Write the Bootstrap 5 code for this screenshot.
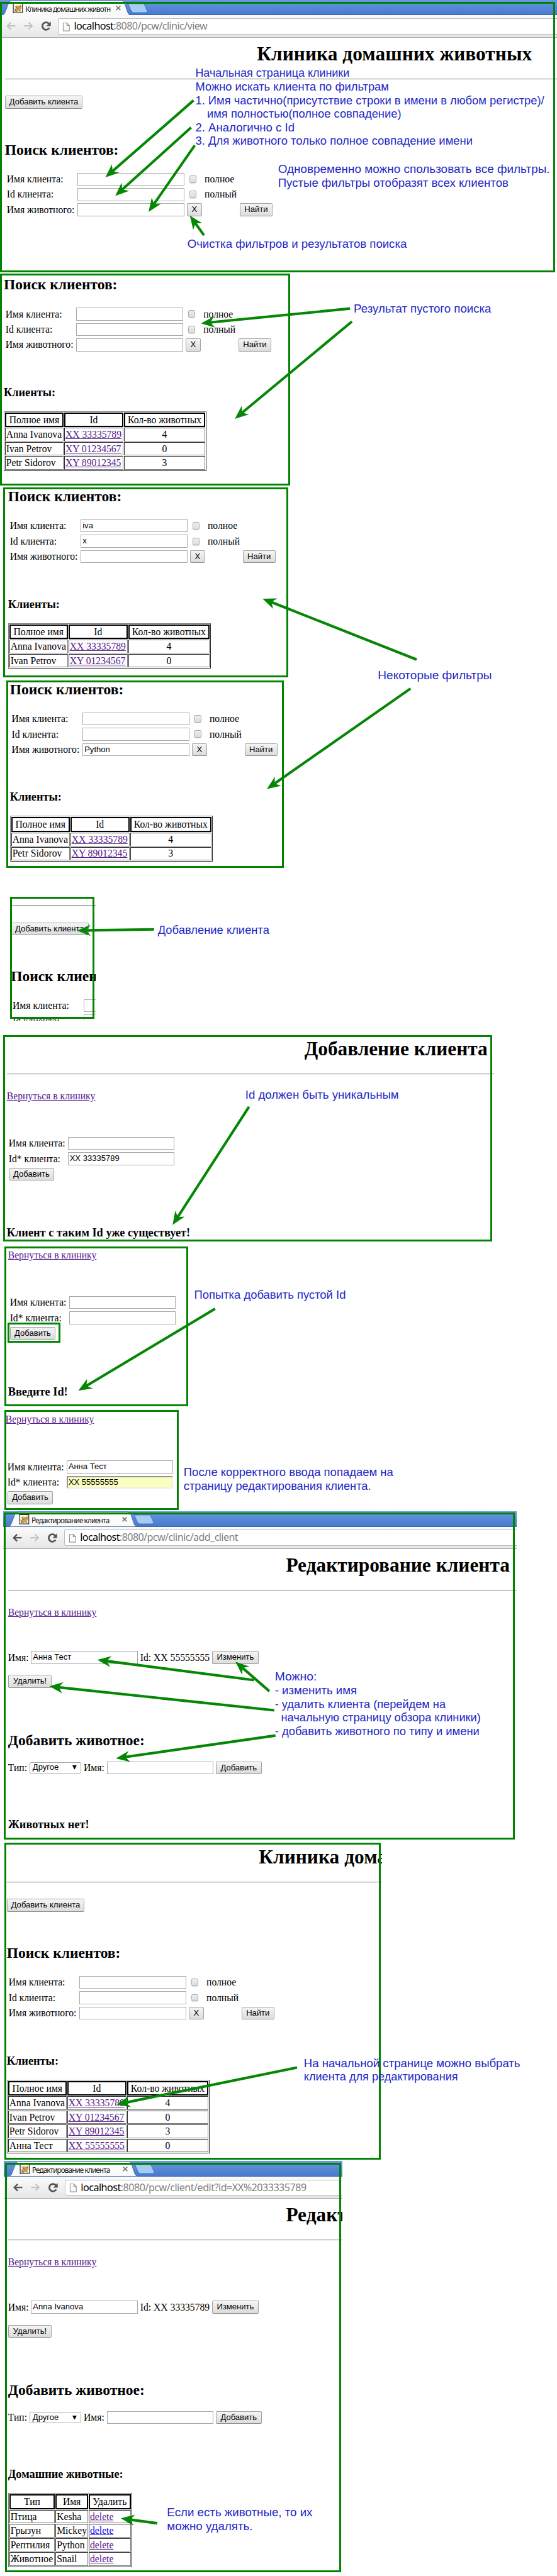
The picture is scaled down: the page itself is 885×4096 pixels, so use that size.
<!DOCTYPE html>
<html lang="ru">
<head>
<meta charset="utf-8">
<title>Клиника домашних животных</title>
<link href="https://cdn.jsdelivr.net/npm/bootstrap@5.3.0/dist/css/bootstrap.min.css" rel="stylesheet">
<style>
html,body{margin:0;overflow:hidden;background:#fff}
body{font:16px/18px "Liberation Serif",serif;color:#000}
.guide{width:904px;height:4182.5px;zoom:.9793;overflow:hidden;position:relative}
/* one captured page fragment, with its green frame drawn over it */
.shot{position:relative;flex:none}
.clip{overflow:hidden;width:100%;height:100%;white-space:nowrap}
.shot::after{content:"";position:absolute;inset:var(--in,0);border:3.1px solid #028402;pointer-events:none}
#s1{width:904px;height:442px;--in:3px 3px 0 0}
#s2{width:471px;height:344px;margin-top:2px}
#s3{width:463px;height:309px;margin:3px 0 0 5px}
#s4{width:451px;height:304px;margin:5px 0 0 10px}
#s5{width:139px;height:201px;margin:47px 0 0 16px;--in:0 2px 3px 0}
#s6{width:797px;height:335px;margin:24px 0 0 5px;--in:0 3px 0 0}
#s7{width:298px;height:259px;margin:8px 0 0 7px}
#s8{width:283px;height:163px;margin:6px 0 0 7px}
#s9{width:833px;height:533px;margin:2px 0 0 5px;--in:2px 3px 0 1px}
#s10{width:613px;height:515px;margin:5px 0 0 7px;--in:0 2px 0 0}
#s11{width:550px;height:668px;margin:2px 0 0 6px;--in:3px 3px 0 2px}
#s1 .sheet{margin-left:8px}#s2 .sheet{margin-left:6px}#s3 .sheet{margin-left:8px}#s4 .sheet{margin-left:6px}
#s5 .sheet{margin-left:1.5px}#s6 .sheet{margin-left:6px}#s7 .sheet{margin-left:6px}#s8 .sheet{margin-left:2px}
#s9 .sheet{margin-left:8px}#s10 .sheet{margin-left:4px}#s11 .sheet{margin-left:7px}
.sheet h1,.sheet h2,.sheet h3{font-family:"Liberation Serif",serif;font-weight:700;margin:0;color:#000}
.sheet h1{font-size:32px;line-height:36px;height:36px;padding-left:409px;margin-top:8px}
.sheet h2{font-size:24px;line-height:27px;height:27px}
.sheet h3{font-size:18.72px;line-height:21px;height:21px;margin-top:56.4px}
#s6 h1{padding-left:483px;margin-top:4px}#s9 h1,#s11 h1{padding-left:451px}#s10 h1{margin-top:5px}
#s2 h2{margin-top:4.4px}#s3 h2{margin-top:1.4px}#s4 h2{margin-top:.6px}
#s1 h2,#s5 h2,#s10 h2{margin-top:53px}
#s6 h3,#s7 h3{margin-top:74.4px}#s9 h3,#s11 h3{margin-top:71.4px}
#s9 h2,#s11 h2{margin-top:71px}
.rule{height:2px;border-top:1px solid #989898;background:#eee;margin-top:22.4px}
#s5 .rule{margin:13.6px 0 0 1.5px}
.solo{margin-top:26px;height:21px}
.back{display:block;height:18px;margin-top:25.5px}
#s7 .back{margin-top:5px}#s8 .back{margin-top:7px}
.sheet a{color:#551a8b;text-decoration:underline}
.sheet a.fresh{color:#00e}
.fields{display:flex;flex-direction:column;gap:4px;margin-top:24px}
.fields.adding{margin-top:57.3px}
.line{display:flex;height:21px;align-items:center}
.lab{width:118px;padding-left:3px;flex:none}
.adding .lab{width:99px}
.fld{width:173px;height:21px;border:1px solid #a9a9a9;background:#fff;font:13.33px/19px "Liberation Sans",sans-serif;padding-left:2px;flex:none}
.fld.auto{background:#faffbd;border:2.05px solid;border-color:#969696 #eee #eee #969696;line-height:17px;padding-left:1px}
.tick{width:12px;height:12px;border:1px solid #aaa;border-radius:2.5px;background:linear-gradient(#eee,#dcdcdc);box-shadow:0 1px 1px #ddd;margin:0 13px 0 8px;flex:none}
.sheet .btn{font:13.33px/19px "Liberation Sans",sans-serif;color:#000;padding:0;height:21px;border:1px solid #a3a3a3;border-bottom-color:#8f8f8f;border-radius:2px;background:linear-gradient(#f5f5f5,#dcdcdc);flex:none;display:block}
.w-add{width:126px}.w-x{width:25px;margin-left:4px}.w-find{width:53px;margin-left:61px}.w-put{width:74px}.w-ed{width:75px;margin-left:4px}.w-del{width:71px}
.adding .w-put{margin-left:3px}
.grid-b{border:1px solid;border-color:gray #2b2b2b #2b2b2b gray;border-collapse:separate;border-spacing:2px;margin-top:20px;table-layout:fixed}
.grid-b th{border:2.05px solid #000;font-weight:400;text-align:center;height:24px;padding:0 1px;line-height:18px}
.grid-b td{border:1px solid;border-color:#2b2b2b gray gray #2b2b2b;height:22px;padding:0 1px;line-height:18px}
.clients{width:329px}.pets{width:201px}
.clients td:last-child{text-align:center}
.sel{width:84px;height:19px;border:1px solid #a9a9a9;border-radius:2px;font:13.33px/17px "Liberation Sans",sans-serif;padding:0 6px 0 4px;display:flex;justify-content:space-between;align-items:center;margin:0 4px}
/* browser header */
.strip{height:25px;background:linear-gradient(#6698e4,#4a79cd);display:flex;border-bottom:1px solid #3a63a8;position:relative}
.strip svg{position:absolute;left:0;top:0}
.tabtext{position:relative;margin:7px 0 0 41px;width:138px;height:15px;font:12px/15px "Noto Sans",sans-serif;color:#111}
.tools{height:36px;background:linear-gradient(#fbfbfb,#e6e6e6);border-bottom:1px solid #a4a4a4;display:flex}
.tools>svg{flex:none}
.addr{margin:5px 0 0 1px;height:26px;flex:1;border:1px solid #bdbdbd;border-right:0;border-radius:3px 0 0 3px;background:#fff;display:flex;font:16.5px/24px "Noto Sans",sans-serif;color:#808080}
.addr svg{margin:5px 6px 0 6px}
.addr b{font-weight:400;color:#000}
#s9 .strip svg,#s11 .strip svg{left:5px}#s9 .tabtext,#s11 .tabtext{margin-left:46px}#s9 .tools,#s11 .tools{padding-left:5px}
.ring{position:absolute;left:5px;top:124px;width:86px;height:32px;border:3.1px solid #028402}
.over{position:absolute;left:0;top:0;pointer-events:none}
.over text{font:18px "Liberation Sans",sans-serif;fill:#2328c6}
.over polygon{fill:#058705}
</style>
<script src="https://cdn.jsdelivr.net/npm/bootstrap@5.3.0/dist/js/bootstrap.bundle.min.js"></script>
</head>
<body>
<svg width="0" height="0" class="position-absolute">
<defs>
<linearGradient id="tabfill" x2="0" y2="1"><stop stop-color="#fff"/><stop offset="1" stop-color="#fafafa"/></linearGradient>
<symbol id="tabs" viewBox="0 0 245 25"><path d="M0 25C7 25 7 23 9 18L14 5Q15.500 1 19 1H197Q200.500 1 202 5L207 20Q209 25 213 25Z" fill="url(#tabfill)" stroke="#3c63a5" stroke-width=".8"/><path d="M209 6H232Q234 6 235 9L239 18Q240 20.500 237 20.500H217Q214 20.500 213 18L208.500 8Q208 6 209 6Z" fill="#a5cbf7" stroke="#3d66ad" stroke-width=".9"/>
<rect x="21.500" y="5.500" width="15" height="15" fill="#fff" stroke="#000"/><path d="M25 11l1-3 2 2h3l3-3 1 3v4l-2 2 1 3h-3l-2-2-3 2h-3l2-4z" fill="#d2a04c"/><path d="M22.500 14l3 2-2 3M29 18l-3 1M31 11l1 1M34 10l-1 1M26 12l3 2M32 17l2 2" stroke="#5b4a2c" fill="none"/><path d="M23 9l2 2M28 9l2 1" stroke="#777"/>
<path d="M188.500 9.500l7 7m0-7l-7 7" stroke="#777" stroke-width="1.700"/></symbol>
<symbol id="nav-b" viewBox="0 0 93 35"><path d="M25 17.500H12.500M17.500 12L12 17.500l5.500 5.500" fill="none" stroke="var(--bk)" stroke-width="2.500"/><path d="M39 17.500H51.500M46.500 12L52 17.500 46.500 23" fill="none" stroke="#c4c4c4" stroke-width="2.200"/><path d="M80 20.800A6 6 0 1 1 79.500 14" fill="none" stroke="#555" stroke-width="2.800"/><path d="M82.500 10.500V18H75Z" fill="#555"/></symbol>
<symbol id="doc" viewBox="0 0 13 16"><path d="M1.500 1.500H7.500L11.500 5.500V14.500H1.500ZM7.500 1.500V5.500H11.500" fill="#fbfbfb" stroke="#999" stroke-width="1.200"/></symbol>
</defs></svg>

<main class="guide d-flex flex-column">
<section class="shot" id="s1"><div class="clip">
<div class="strip"><svg width="245" height="25"><use href="#tabs"/></svg><div class="tabtext"><span data-w="138">Клиника домашних животн</span></div></div>
<div class="tools"><svg width="93" height="35" style="--bk:#c4c4c4"><use href="#nav-b"/></svg><div class="addr"><svg width="13" height="16"><use href="#doc"/></svg><span data-w="216"><b>localhost</b>:8080/pcw/clinic/view</span></div></div>
<div class="sheet"><h1><span data-w="446">Клиника домашних животных</span></h1><div class="rule"></div>
<div class="solo"><button class="btn w-add">Добавить клиента</button></div>
<h2>Поиск клиентов:</h2>
<div class="fields">
<div class="line"><span class="lab">Имя клиента:</span><div class="fld"></div><i class="tick"></i>полное</div>
<div class="line"><span class="lab">Id клиента:</span><div class="fld"></div><i class="tick"></i>полный</div>
<div class="line"><span class="lab">Имя животного:</span><div class="fld"></div><button class="btn w-x">X</button><button class="btn w-find">Найти</button></div>
</div></div></div></section>

<section class="shot" id="s2"><div class="clip"><div class="sheet">
<h2>Поиск клиентов:</h2>
<div class="fields">
<div class="line"><span class="lab">Имя клиента:</span><div class="fld"></div><i class="tick"></i>полное</div>
<div class="line"><span class="lab">Id клиента:</span><div class="fld"></div><i class="tick"></i>полный</div>
<div class="line"><span class="lab">Имя животного:</span><div class="fld"></div><button class="btn w-x">X</button><button class="btn w-find">Найти</button></div>
</div>
<h3>Клиенты:</h3>
<table class="grid-b clients"><colgroup><col style="width:95px"><col style="width:96px"><col></colgroup>
<tr><th>Полное имя</th><th>Id</th><th>Кол-во животных</th></tr>
<tr><td>Anna Ivanova</td><td><a href="#">XX 33335789</a></td><td>4</td></tr>
<tr><td>Ivan Petrov</td><td><a href="#">XY 01234567</a></td><td>0</td></tr>
<tr><td>Petr Sidorov</td><td><a href="#">XY 89012345</a></td><td>3</td></tr></table>
</div></div></section>

<section class="shot" id="s3"><div class="clip"><div class="sheet">
<h2>Поиск клиентов:</h2>
<div class="fields">
<div class="line"><span class="lab">Имя клиента:</span><div class="fld">iva</div><i class="tick"></i>полное</div>
<div class="line"><span class="lab">Id клиента:</span><div class="fld">x</div><i class="tick"></i>полный</div>
<div class="line"><span class="lab">Имя животного:</span><div class="fld"></div><button class="btn w-x">X</button><button class="btn w-find">Найти</button></div>
</div>
<h3>Клиенты:</h3>
<table class="grid-b clients"><colgroup><col style="width:95px"><col style="width:96px"><col></colgroup>
<tr><th>Полное имя</th><th>Id</th><th>Кол-во животных</th></tr>
<tr><td>Anna Ivanova</td><td><a href="#">XX 33335789</a></td><td>4</td></tr>
<tr><td>Ivan Petrov</td><td><a href="#">XY 01234567</a></td><td>0</td></tr></table>
</div></div></section>

<section class="shot" id="s4"><div class="clip"><div class="sheet">
<h2>Поиск клиентов:</h2>
<div class="fields">
<div class="line"><span class="lab">Имя клиента:</span><div class="fld"></div><i class="tick"></i>полное</div>
<div class="line"><span class="lab">Id клиента:</span><div class="fld"></div><i class="tick"></i>полный</div>
<div class="line"><span class="lab">Имя животного:</span><div class="fld">Python</div><button class="btn w-x">X</button><button class="btn w-find">Найти</button></div>
</div>
<h3>Клиенты:</h3>
<table class="grid-b clients"><colgroup><col style="width:95px"><col style="width:96px"><col></colgroup>
<tr><th>Полное имя</th><th>Id</th><th>Кол-во животных</th></tr>
<tr><td>Anna Ivanova</td><td><a href="#">XX 33335789</a></td><td>4</td></tr>
<tr><td>Petr Sidorov</td><td><a href="#">XY 89012345</a></td><td>3</td></tr></table>
</div></div></section>

<section class="shot" id="s5"><div class="clip"><div class="sheet">
<div class="rule"></div>
<div class="solo"><button class="btn w-add">Добавить клиента</button></div>
<h2>Поиск клиентов:</h2>
<div class="fields">
<div class="line"><span class="lab">Имя клиента:</span><div class="fld"></div></div>
<div class="line"><span class="lab">Id клиента:</span><div class="fld"></div></div>
</div></div></div></section>

<section class="shot" id="s6"><div class="clip"><div class="sheet">
<h1><span data-w="297">Добавление клиента</span></h1><div class="rule"></div>
<a class="back" href="#">Вернуться в клинику</a>
<div class="fields adding">
<div class="line"><span class="lab">Имя клиента:</span><div class="fld"></div></div>
<div class="line"><span class="lab">Id* клиента:</span><div class="fld">XX 33335789</div></div>
<div class="line"><button class="btn w-put">Добавить</button></div>
</div>
<h3>Клиент с таким Id уже существует!</h3>
</div></div></section>

<section class="shot" id="s7"><div class="clip"><div class="sheet">
<a class="back" href="#">Вернуться в клинику</a>
<div class="fields adding">
<div class="line"><span class="lab">Имя клиента:</span><div class="fld"></div></div>
<div class="line"><span class="lab">Id* клиента:</span><div class="fld"></div></div>
<div class="line"><button class="btn w-put">Добавить</button></div>
</div>
<h3>Введите Id!</h3>
</div></div><div class="ring"></div></section>

<section class="shot" id="s8"><div class="clip"><div class="sheet">
<a class="back" href="#">Вернуться в клинику</a>
<div class="fields adding">
<div class="line"><span class="lab">Имя клиента:</span><div class="fld">Анна Тест</div></div>
<div class="line"><span class="lab">Id* клиента:</span><div class="fld auto">XX 55555555</div></div>
<div class="line"><button class="btn w-put">Добавить</button></div>
</div>
</div></div></section>

<section class="shot" id="s9"><div class="clip">
<div class="strip"><svg width="245" height="25"><use href="#tabs"/></svg><div class="tabtext"><span data-w="126">Редактирование клиента</span></div></div>
<div class="tools"><svg width="93" height="35" style="--bk:#555"><use href="#nav-b"/></svg><div class="addr"><svg width="13" height="16"><use href="#doc"/></svg><span data-w="256"><b>localhost</b>:8080/pcw/clinic/add_client</span></div></div>
<div class="sheet"><h1><span data-w="363">Редактирование клиента</span></h1><div class="rule"></div>
<a class="back" href="#">Вернуться в клинику</a>
<div class="line" style="margin-top:54px">Имя:&nbsp;<div class="fld">Анна Тест</div>&nbsp;Id: XX 55555555<button class="btn w-ed">Изменить</button></div>
<div class="line" style="margin-top:18px"><button class="btn w-del">Удалить!</button></div>
<h2>Добавить животное:</h2>
<div class="line" style="margin-top:21px">Тип:<div class="sel">Другое<svg width="7" height="7" viewBox="0 0 7 7"><path d="M0 0H7L3.500 7Z"/></svg></div>Имя:&nbsp;<div class="fld"></div><button class="btn w-put ms-1">Добавить</button></div>
<h3>Животных нет!</h3>
</div></div></section>

<section class="shot" id="s10"><div class="clip"><div class="sheet">
<h1><span data-w="446">Клиника домашних животных</span></h1><div class="rule"></div>
<div class="solo"><button class="btn w-add">Добавить клиента</button></div>
<h2>Поиск клиентов:</h2>
<div class="fields">
<div class="line"><span class="lab">Имя клиента:</span><div class="fld"></div><i class="tick"></i>полное</div>
<div class="line"><span class="lab">Id клиента:</span><div class="fld"></div><i class="tick"></i>полный</div>
<div class="line"><span class="lab">Имя животного:</span><div class="fld"></div><button class="btn w-x">X</button><button class="btn w-find">Найти</button></div>
</div>
<h3>Клиенты:</h3>
<table class="grid-b clients"><colgroup><col style="width:95px"><col style="width:96px"><col></colgroup>
<tr><th>Полное имя</th><th>Id</th><th>Кол-во животных</th></tr>
<tr><td>Anna Ivanova</td><td><a href="#">XX 33335789</a></td><td>4</td></tr>
<tr><td>Ivan Petrov</td><td><a href="#">XY 01234567</a></td><td>0</td></tr>
<tr><td>Petr Sidorov</td><td><a href="#">XY 89012345</a></td><td>3</td></tr>
<tr><td>Анна Тест</td><td><a href="#">XX 55555555</a></td><td>0</td></tr></table>
</div></div></section>

<section class="shot" id="s11"><div class="clip">
<div class="strip"><svg width="245" height="25"><use href="#tabs"/></svg><div class="tabtext"><span data-w="126">Редактирование клиента</span></div></div>
<div class="tools"><svg width="93" height="35" style="--bk:#555"><use href="#nav-b"/></svg><div class="addr"><svg width="13" height="16"><use href="#doc"/></svg><span data-w="366"><b>localhost</b>:8080/pcw/client/edit?id=XX%2033335789</span></div></div>
<div class="sheet"><h1><span data-w="363">Редактирование клиента</span></h1><div class="rule"></div>
<a class="back" href="#">Вернуться в клинику</a>
<div class="line" style="margin-top:54px">Имя:&nbsp;<div class="fld">Anna Ivanova</div>&nbsp;Id: XX 33335789<button class="btn w-ed">Изменить</button></div>
<div class="line" style="margin-top:18px"><button class="btn w-del">Удалить!</button></div>
<h2>Добавить животное:</h2>
<div class="line" style="margin-top:21px">Тип:<div class="sel">Другое<svg width="7" height="7" viewBox="0 0 7 7"><path d="M0 0H7L3.500 7Z"/></svg></div>Имя:&nbsp;<div class="fld"></div><button class="btn w-put ms-1">Добавить</button></div>
<h3>Домашние животные:</h3>
<table class="grid-b pets"><colgroup><col style="width:74px"><col style="width:53px"><col></colgroup>
<tr><th>Тип</th><th>Имя</th><th>Удалить</th></tr>
<tr><td>Птица</td><td>Kesha</td><td><a href="#">delete</a></td></tr>
<tr><td>Грызун</td><td>Mickey</td><td><a href="#" class="fresh">delete</a></td></tr>
<tr><td>Рептилия</td><td>Python</td><td><a href="#">delete</a></td></tr>
<tr><td>Животное</td><td>Snail</td><td><a href="#">delete</a></td></tr></table>
</div></div></section>

<svg class="over" width="904" height="4182" viewBox="0 0 904 4182">
<g id="arrows"></g>
<text x="317" y="125" textLength="250">Начальная страница клиники</text>
<text x="317" y="147" textLength="314">Можно искать клиента по фильтрам</text>
<text x="317" y="169" textLength="566">1. Имя частично(присутствие строки в имени в любом регистре)/</text>
<text x="336" y="191" textLength="315">имя полностью(полное совпадение)</text>
<text x="317" y="213" textLength="161">2. Аналогично с Id</text>
<text x="317" y="235" textLength="450">3. Для животного только полное совпадение имени</text>
<text x="451" y="281" textLength="441">Одновременно можно спользовать все фильтры.</text>
<text x="451" y="303" textLength="374">Пустые фильтры отобразят всех клиентов</text>
<text x="304" y="402" textLength="356">Очистка фильтров и результатов поиска</text>
<text x="574" y="508" textLength="223">Результат пустого поиска</text>
<text x="613" y="1103" textLength="185">Некоторые фильтры</text>
<text x="256" y="1516" textLength="181">Добавление клиента</text>
<text x="398" y="1784" textLength="249">Id должен быть уникальным</text>
<text x="315" y="2109" textLength="246">Попытка добавить пустой Id</text>
<text x="298" y="2397" textLength="340">После корректного ввода попадаем на</text>
<text x="298" y="2419" textLength="304">страницу редактирования клиента.</text>
<text x="446" y="2729" textLength="68">Можно:</text>
<text x="446" y="2751" textLength="133">- изменить имя</text>
<text x="446" y="2773" textLength="277">- удалить клиента (перейдем на</text>
<text x="456" y="2795" textLength="324">начальную страницу обзора клиники)</text>
<text x="446" y="2817" textLength="332">- добавить животного по типу и имени</text>
<text x="493" y="3356" textLength="351">На начальной странице можно выбрать</text>
<text x="493" y="3378" textLength="250">клиента для редактирования</text>
<text x="271" y="4086" textLength="236">Если есть животные, то их</text>
<text x="271" y="4108" textLength="139">можно удалять.</text>
</svg>
</main>
<script>
// arrows: tail x, tail y, tip x, tip y
const arrows=[[314,163,171,288],[310,207,187,318],[316,236,241,344],[331,382,308,350],[568,501,326,525],[571,522,381,680],[676,1071,426,972],[666,1118,433,1281],[250,1509,125,1511],[404,1797,280,1989],[349,2125,127,2258],[412,2728,158,2695],[437,2746,382,2698],[445,2777,80,2738],[447,2818,188,2855],[482,3357,189,3417],[255,4097,196,4089]];
document.getElementById('arrows').innerHTML=arrows.map(([x,y,a,b])=>{
 const d=Math.hypot(a-x,b-y),u=(a-x)/d,v=(b-y)/d;
 const pt=(back,side)=>(a-u*back-v*side).toFixed(1)+','+(b-v*back+u*side).toFixed(1);
 return '<polygon points="'+[pt(0,0),pt(22,9),pt(17,2.1),pt(d,2.1),pt(d,-2.1),pt(17,-2.1),pt(22,-9)].join(' ')+'"/>';
}).join('');
document.querySelectorAll('.over text').forEach(t=>t.setAttribute('lengthAdjust','spacingAndGlyphs'));
// spread the letters of a label over a set width
const k=document.querySelector('.guide').getBoundingClientRect().width/904;
document.querySelectorAll('[data-w]').forEach(e=>{
 const n=e.textContent.length,w=e.getBoundingClientRect().width/k;
 e.style.letterSpacing=((+e.dataset.w-w)/n).toFixed(3)+'px';
});
</script>
</body>
</html>
